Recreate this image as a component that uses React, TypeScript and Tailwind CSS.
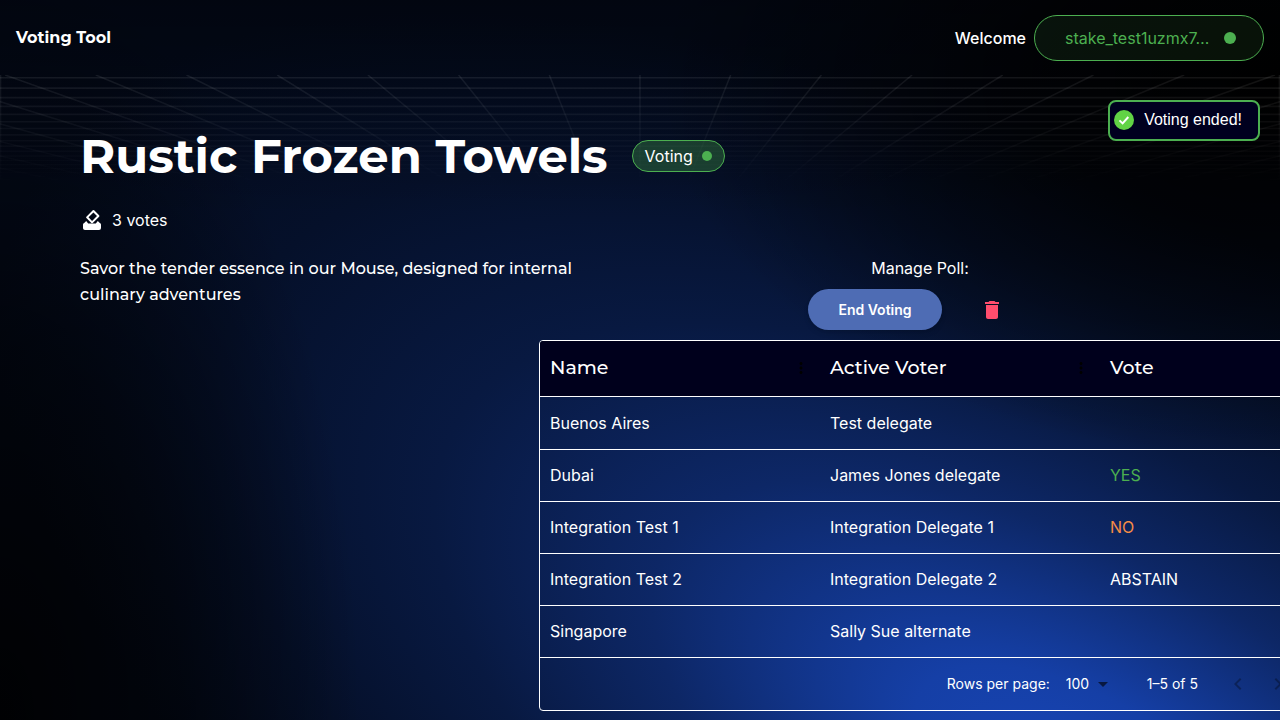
import { useState } from "react";
import { MdArrowDropDown, MdChevronLeft, MdChevronRight, MdDelete, MdMoreVert } from "react-icons/md";

const rows = [
  { name: "Buenos Aires", voter: "Test delegate", vote: "" },
  { name: "Dubai", voter: "James Jones delegate", vote: "YES" },
  { name: "Integration Test 1", voter: "Integration Delegate 1", vote: "NO" },
  { name: "Integration Test 2", voter: "Integration Delegate 2", vote: "ABSTAIN" },
  { name: "Singapore", voter: "Sally Sue alternate", vote: "" },
];

const voteColors: Record<string, string> = {
  YES: "text-[#4caf50]",
  NO: "text-[#f58c46]",
  ABSTAIN: "text-white",
};

function Backdrop() {
  return (
    <svg className="absolute inset-0 -z-10 h-full w-full" viewBox="0 0 1280 720" preserveAspectRatio="none" aria-hidden="true">
      <defs>
        <radialGradient id="glow" gradientUnits="userSpaceOnUse" cx="0" cy="0" r="1" gradientTransform="translate(1090 790) rotate(30) scale(1220 560)">
          <stop offset="0" stopColor="#1846b8" />
          <stop offset="0.16" stopColor="#153fa6" />
          <stop offset="0.4" stopColor="#0d2766" />
          <stop offset="0.6" stopColor="#081941" />
          <stop offset="0.8" stopColor="#05102a" />
          <stop offset="1" stopColor="#030a1b" />
        </radialGradient>
        <radialGradient id="shadeLeft" gradientUnits="userSpaceOnUse" cx="0" cy="0" r="1" gradientTransform="translate(0 720) scale(360 760)">
          <stop offset="0" stopColor="#000" stopOpacity="0.9" />
          <stop offset="0.5" stopColor="#000" stopOpacity="0.55" />
          <stop offset="1" stopColor="#000" stopOpacity="0" />
        </radialGradient>
        <radialGradient id="shadeRight" gradientUnits="userSpaceOnUse" cx="0" cy="0" r="1" gradientTransform="translate(1280 80) scale(620 380)">
          <stop offset="0" stopColor="#000" />
          <stop offset="0.4" stopColor="#000" stopOpacity="0.75" />
          <stop offset="1" stopColor="#000" stopOpacity="0" />
        </radialGradient>
        <linearGradient id="shadeTop" x1="0" y1="0" x2="0" y2="1">
          <stop offset="0" stopColor="#000" stopOpacity="0.4" />
          <stop offset="0.3" stopColor="#000" stopOpacity="0" />
        </linearGradient>
      </defs>
      <rect width="1280" height="720" fill="url(#glow)" />
      <rect width="1280" height="720" fill="url(#shadeLeft)" />
      <rect width="1280" height="720" fill="url(#shadeRight)" />
      <rect width="1280" height="720" fill="url(#shadeTop)" />
    </svg>
  );
}

const vanishY = 226;
const horizontals = Array.from({ length: 20 }, (_, k) => vanishY - 1 / (0.004478 + 0.00022 * k));
const verticals = Array.from({ length: 31 }, (_, k) => (k - 15) * 90.7);

function PerspectiveGrid() {
  return (
    <svg className="absolute inset-x-0 top-0 -z-10 h-[110px] w-full" viewBox="0 0 1280 110" preserveAspectRatio="none" aria-hidden="true">
      <defs>
        <linearGradient id="fade" x1="0" y1="0" x2="0" y2="1">
          <stop offset="0" stopColor="#fff" />
          <stop offset="1" stopColor="#000" />
        </linearGradient>
        <mask id="fadeMask">
          <rect width="1280" height="110" fill="url(#fade)" />
        </mask>
      </defs>
      <g mask="url(#fadeMask)" stroke="#fff" strokeOpacity="0.08" strokeWidth="1.6">
        {horizontals.map((y) => (
          <line key={y} x1="0" x2="1280" y1={y} y2={y} />
        ))}
        {verticals.map((x) => (
          <line key={x} x1={640 + x} y1="0" x2={640 + (x * (vanishY - 110)) / vanishY} y2="110" />
        ))}
        <line x1="0.5" x2="0.5" y1="0" y2="110" />
        <line x1="1279.5" x2="1279.5" y1="0" y2="110" />
      </g>
    </svg>
  );
}

function BallotIcon() {
  return (
    <svg className="size-6" viewBox="0 0 24 24" fill="currentColor" aria-hidden="true">
      <path d="M6.2 13 4.2 15C3.4 15.3 3 16 3 16.8V20c0 1.1.9 2 2 2h14a2 2 0 0 0 2-2v-3.2c0-.8-.4-1.5-1.2-1.8l-2-2-2 2.4H8.2z" />
      <path fillRule="evenodd" d="M12.76 2.29 6.39 8.66a1 1 0 0 0 0 1.41l4.95 4.95c.39.39 1.02.39 1.41 0l6.36-6.36a1 1 0 0 0 0-1.41L14.16 2.3a.98.98 0 0 0-1.4-.01zM17 7.95l-4.95 4.95-3.54-3.54 4.95-4.95L17 7.95z" />
    </svg>
  );
}

function Header() {
  return (
    <header className="flex items-center justify-between px-4 pt-[15px] pb-[14px]">
      <a href="#" className="font-['Montserrat','Inter',sans-serif] text-base font-bold">
        Voting Tool
      </a>
      <div className="flex items-center gap-2">
        <span className="font-medium">Welcome</span>
        <button type="button" className="flex h-[46px] w-[230px] items-center rounded-full border border-[#4caf50] bg-[#4caf50]/10 pr-[27px] pl-[30px] text-[#4caf50]">
          <span className="flex-1 truncate text-left">stake_test1uzmx7…</span>
          <span className="size-3 rounded-full bg-[#4caf50]" />
        </button>
      </div>
    </header>
  );
}

function Toast() {
  return (
    <div role="status" className="absolute top-[100px] right-5 flex h-[41px] items-center rounded-lg border-2 border-[#4caf50] bg-[#00001f] pr-4 pb-[2px] pl-1 font-['Liberation_Sans',sans-serif]">
      <svg className="size-5" viewBox="0 0 20 20" aria-hidden="true">
        <circle cx="10" cy="10" r="10" fill="#61d345" />
        <path d="M5.5 10.4 8.6 13.4 14.3 7" fill="none" stroke="#fff" strokeWidth="2" />
      </svg>
      <span className="ml-[10px]">Voting ended!</span>
    </div>
  );
}

function ColumnHeader({ label, menu }: { label: string; menu?: boolean }) {
  return (
    <th scope="col" className="px-[10px] text-left font-['Montserrat','Inter',sans-serif] text-[19px] font-medium">
      <div className="flex items-center justify-between">
        {label}
        {menu && (
          <button type="button" aria-label={label + " column menu"} className="text-black">
            <MdMoreVert className="size-[18px]" />
          </button>
        )}
      </div>
    </th>
  );
}

function VotesTable() {
  const [pageSize, setPageSize] = useState("100");
  return (
    <div className="w-[762px] shrink-0 overflow-hidden rounded border border-white">
      <table className="w-full table-fixed border-collapse">
        <colgroup>
          <col className="w-[280px]" />
          <col className="w-[280px]" />
          <col />
        </colgroup>
        <thead>
          <tr className="h-[55px] border-b border-white bg-[#00001c]">
            <ColumnHeader label="Name" menu />
            <ColumnHeader label="Active Voter" menu />
            <ColumnHeader label="Vote" />
          </tr>
        </thead>
        <tbody>
          {rows.map((row) => (
            <tr key={row.name} className="h-[52px] border-b border-white first:h-[53px]">
              <td className="px-[10px]">{row.name}</td>
              <td className="px-[10px]">{row.voter}</td>
              <td className={"px-[10px] " + (voteColors[row.vote] ?? "")}>{row.vote}</td>
            </tr>
          ))}
        </tbody>
      </table>
      <div className="flex h-[52px] items-center justify-end pr-[2px] text-sm">
        <label htmlFor="page-size">Rows per page:</label>
        <div className="relative ml-4 flex items-center">
          <select id="page-size" value={pageSize} onChange={(e) => setPageSize(e.target.value)} className="w-12 appearance-none bg-transparent outline-none">
            <option value="25">25</option>
            <option value="50">50</option>
            <option value="100">100</option>
          </select>
          <MdArrowDropDown className="pointer-events-none absolute -right-px size-6 text-black/60" />
        </div>
        <span className="ml-[33px]">1–5 of 5</span>
        <div className="ml-5 flex text-black/30">
          <button type="button" aria-label="Previous page" className="flex size-10 items-center justify-center">
            <MdChevronLeft className="size-6" />
          </button>
          <button type="button" aria-label="Next page" className="flex size-10 items-center justify-center">
            <MdChevronRight className="size-6" />
          </button>
        </div>
      </div>
    </div>
  );
}

export default function App() {
  return (
    <div className="relative isolate min-h-screen overflow-hidden bg-black font-['Inter',sans-serif] text-base text-white">
      <Backdrop />
      <Header />
      <main className="relative px-20 pt-[49px] pb-[9px]">
        <PerspectiveGrid />
        <div className="flex items-center gap-6">
          <h1 className="font-['Montserrat','Inter',sans-serif] text-5xl leading-[64px] font-bold">Rustic Frozen Towels</h1>
          <span className="flex h-8 items-center gap-[9px] rounded-full border border-[#4caf50] bg-[#4caf50]/30 px-3">
            Voting
            <span className="size-[10px] rounded-full bg-[#4caf50]" />
          </span>
        </div>
        <div className="mt-5 flex h-6 items-center gap-2">
          <BallotIcon />
          3 votes
        </div>
        <div className="mt-6 grid grid-cols-2">
          <p className="pr-10 font-['Montserrat','Inter',sans-serif] leading-[26px] font-medium">
            Savor the tender essence in our Mouse, designed for internal culinary adventures
          </p>
          <section className="flex min-w-0 flex-col items-center">
            <h2 className="leading-6">Manage Poll:</h2>
            <div className="mt-[9px] mb-[10px] flex items-center gap-[30px] pr-5">
              <button type="button" className="h-[41px] rounded-full bg-[#4e6cb4] px-[30px] text-sm font-semibold shadow-md">
                End Voting
              </button>
              <button type="button" aria-label="Delete poll" className="flex size-10 items-center justify-center text-[#ff4d6d]">
                <MdDelete className="size-6" />
              </button>
            </div>
            <VotesTable />
          </section>
        </div>
      </main>
      <Toast />
    </div>
  );
}
